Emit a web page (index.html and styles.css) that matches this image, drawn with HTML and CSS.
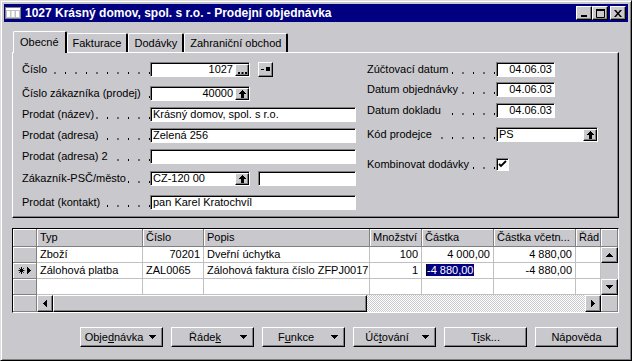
FILE: index.html
```html
<!DOCTYPE html>
<html lang="cs">
<head>
<meta charset="utf-8">
<title>Prodejní objednávka</title>
<link rel="stylesheet" href="styles.css">
</head>
<body>
<div class="window">
  <div class="titlebar">
    <svg class="appicon" width="16" height="14" viewBox="0 0 16 14"><rect x="0.5" y="1.5" width="15" height="11" fill="#c0c0c0" stroke="#808080"/><rect x="1" y="2" width="14" height="2" fill="#fff"/><rect x="2" y="5" width="3" height="6" fill="#fff"/><rect x="6.5" y="5" width="3" height="6" fill="#fff"/><rect x="11" y="5" width="3" height="6" fill="#fff"/></svg>
    <span class="title">1027 Krásný domov, spol. s r.o. - Prodejní objednávka</span>
    <div class="wbtns">
      <span class="wbtn"><svg width="8" height="8" viewBox="0 0 8 8"><rect x="1" y="6" width="6" height="2"/></svg></span>
      <span class="wbtn"><svg width="9" height="9" viewBox="0 0 9 9"><path d="M0.5 0.5h8v8h-8z" fill="none" stroke="#000"/><rect x="0" y="0" width="9" height="2"/></svg></span>
      <span class="wbtn close"><svg width="8" height="7" viewBox="0 0 8 7"><path d="M0 0h2l2 2.4L6 0h2L5 3.5 8 7H6L4 4.6 2 7H0l3-3.5z"/></svg></span>
    </div>
  </div>

  <div class="content">
    <div class="tabs">
      <div class="tab active">Obecné</div>
      <div class="tab">Fakturace</div>
      <div class="tab">Dodávky</div>
      <div class="tab">Zahraniční obchod</div>
    </div>

    <div class="panel">
      <div class="col col-left">
        <div class="row">
          <div class="lbl"><span>Číslo</span></div>
          <div class="field w100"><span class="val num">1027</span><span class="lk"><svg width="9" height="2" viewBox="0 0 9 2"><rect x="0" y="0" width="2" height="2"/><rect x="3.5" y="0" width="2" height="2"/><rect x="7" y="0" width="2" height="2"/></svg></span></div>
          <span class="sq"><svg width="9" height="5" viewBox="0 0 9 5"><rect x="0" y="2" width="3" height="1"/><rect x="5" y="0" width="4" height="4"/></svg></span>
        </div>
        <div class="row g9">
          <div class="lbl"><span>Číslo zákazníka (prodej)</span></div>
          <div class="field w100"><span class="val num">40000</span><span class="lk"><svg width="7" height="8" viewBox="0 0 7 8"><path d="M3 0h1v1h1v1h1v1h1v1H5v4H2V4H0V3h1V2h1V1h1z"/></svg></span></div>
        </div>
        <div class="row g6">
          <div class="lbl"><span>Prodat (název)</span></div>
          <div class="field wfull"><span class="val">Krásný domov, spol. s r.o.</span></div>
        </div>
        <div class="row g6">
          <div class="lbl"><span>Prodat (adresa)</span></div>
          <div class="field wfull"><span class="val">Zelená 256</span></div>
        </div>
        <div class="row g6">
          <div class="lbl"><span>Prodat (adresa) 2</span></div>
          <div class="field wfull"><span class="val"></span></div>
        </div>
        <div class="row g7">
          <div class="lbl"><span>Zákazník-PSČ/město</span></div>
          <div class="field w100"><span class="val">CZ-120 00</span><span class="lk"><svg width="7" height="8" viewBox="0 0 7 8"><path d="M3 0h1v1h1v1h1v1h1v1H5v4H2V4H0V3h1V2h1V1h1z"/></svg></span></div>
          <div class="field w98"><span class="val"></span></div>
        </div>
        <div class="row g9">
          <div class="lbl"><span>Prodat (kontakt)</span></div>
          <div class="field wfull"><span class="val">pan Karel Kratochvíl</span></div>
        </div>
      </div>

      <div class="col col-right">
        <div class="row">
          <div class="lbl"><span>Zúčtovací datum</span></div>
          <div class="field wdate"><span class="val num">04.06.03</span></div>
        </div>
        <div class="row g5">
          <div class="lbl"><span>Datum objednávky</span></div>
          <div class="field wdate"><span class="val num">04.06.03</span></div>
        </div>
        <div class="row g6">
          <div class="lbl"><span>Datum dokladu</span></div>
          <div class="field wdate"><span class="val num">04.06.03</span></div>
        </div>
        <div class="row g9">
          <div class="lbl"><span>Kód prodejce</span></div>
          <div class="field wcode"><span class="val">PS</span><span class="lk"><svg width="7" height="8" viewBox="0 0 7 8"><path d="M3 0h1v1h1v1h1v1h1v1H5v4H2V4H0V3h1V2h1V1h1z"/></svg></span></div>
        </div>
        <div class="row g15">
          <div class="lbl"><span>Kombinovat dodávky</span></div>
          <span class="check"><svg width="9" height="9" viewBox="0 0 9 9"><path d="M1 4l2 2 5-5" fill="none" stroke="#000" stroke-width="1.8"/></svg></span>
        </div>
      </div>
    </div>

    <div class="grid">
      <div class="h rh"></div>
      <div class="h">Typ</div>
      <div class="h">Číslo</div>
      <div class="h">Popis</div>
      <div class="h">Množství</div>
      <div class="h">Částka</div>
      <div class="h">Částka včetn...</div>
      <div class="h">Řád</div>
      <div class="h vcorner"></div>

      <div class="rh"></div>
      <div class="c">Zboží</div>
      <div class="c r">70201</div>
      <div class="c">Dveřní úchytka</div>
      <div class="c r">100</div>
      <div class="c r">4 000,00</div>
      <div class="c r">4 880,00</div>
      <div class="c"></div>

      <div class="vs">
        <span class="sb"><svg width="7" height="4" viewBox="0 0 7 4"><path d="M3 0h1v1h1v1h1v1h1v1H0V3h1V2h1V1h1z"/></svg></span>
        <span class="vtrack"></span>
        <span class="sb"><svg width="7" height="4" viewBox="0 0 7 4"><path d="M0 0h7v1H6v1H5v1H4v1H3V3H2V2H1V1H0z"/></svg></span>
      </div>

      <div class="rh cur"><svg width="14" height="9" viewBox="0 0 14 9"><path d="M3.5 1v7M0.5 4.5h6M1.3 2.3l4.4 4.4M5.7 2.3l-4.4 4.4" stroke="#000" fill="none"/><path d="M9 1h1v1h1v1h1v1h1v1h-1v1h-1v1h-1v1H9z"/></svg></div>
      <div class="c">Zálohová platba</div>
      <div class="c">ZAL0065</div>
      <div class="c">Zálohová faktura číslo ZFPJ0017</div>
      <div class="c r">1</div>
      <div class="c selcell"><span class="sel">-4 880,00</span></div>
      <div class="c r">-4 880,00</div>
      <div class="c"></div>

      <div class="rh"></div>
      <div class="c"></div>
      <div class="c"></div>
      <div class="c"></div>
      <div class="c"></div>
      <div class="c"></div>
      <div class="c"></div>
      <div class="c"></div>

      <div class="rh hcorner"></div>
      <div class="hs">
        <span class="sb hb"><svg width="4" height="7" viewBox="0 0 4 7"><path d="M4 0v7H3V6H2V5H1V4H0V3h1V2h1V1h1V0z"/></svg></span>
        <span class="thumb"></span>
        <span class="htrack"></span>
        <span class="sb hb"><svg width="4" height="7" viewBox="0 0 4 7"><path d="M0 0h1v1h1v1h1v1h1v1h-1v1h-1v1h-1v1H0z"/></svg></span>
      </div>
      <div class="rh corner"></div>
    </div>

    <div class="btns">
      <button class="btn dd"><span class="bt">Obje<u>d</u>návka</span><svg width="7" height="4" viewBox="0 0 7 4"><path d="M0 0h7v1H6v1H5v1H4v1H3V3H2V2H1V1H0z"/></svg></button>
      <button class="btn dd"><span class="bt">Řáde<u>k</u></span><svg width="7" height="4" viewBox="0 0 7 4"><path d="M0 0h7v1H6v1H5v1H4v1H3V3H2V2H1V1H0z"/></svg></button>
      <button class="btn dd"><span class="bt">F<u>u</u>nkce</span><svg width="7" height="4" viewBox="0 0 7 4"><path d="M0 0h7v1H6v1H5v1H4v1H3V3H2V2H1V1H0z"/></svg></button>
      <button class="btn dd"><span class="bt">Úč<u>t</u>ování</span><svg width="7" height="4" viewBox="0 0 7 4"><path d="M0 0h7v1H6v1H5v1H4v1H3V3H2V2H1V1H0z"/></svg></button>
      <button class="btn"><span class="bt">T<u>i</u>sk...</span></button>
      <button class="btn"><span class="bt">Nápověda</span></button>
    </div>
  </div>
</div>
</body>
</html>
```

FILE: styles.css
```css
* { box-sizing: border-box; }
html, body { margin: 0; padding: 0; }
body {
  width: 632px;
  height: 361px;
  overflow: hidden;
  background: #c9c8cc;
  font-family: "Liberation Sans", Arial, sans-serif;
  font-size: 11px;
  color: #000;
}

.window {
  width: 632px;
  height: 361px;
  border: 1px solid;
  border-color: #dfdfdf #000 #000 #dfdfdf;
  box-shadow: inset 1px 1px #fff, inset -1px -1px #808080;
  padding: 3px;
  background: #c9c8cc;
  display: flex;
  flex-direction: column;
}

/* title bar */
.titlebar {
  height: 18px;
  flex: none;
  background: #000080;
  color: #fff;
  display: flex;
  align-items: center;
  padding: 0 2px 0 1px;
}
.appicon { display: block; flex: none; }
.title {
  font-weight: bold;
  font-size: 12px;
  margin-left: 4px;
  white-space: nowrap;
}
.wbtns { margin-left: auto; display: flex; }
.wbtn {
  width: 16px;
  height: 14px;
  background: #c9c8cc;
  border: 1px solid;
  border-color: #fff #000 #000 #fff;
  box-shadow: inset -1px -1px #808080;
  display: flex;
  align-items: center;
  justify-content: center;
}
.wbtn svg { display: block; }
.close { margin-left: 2px; }

/* content */
.content {
  flex: 1;
  padding: 9px 9px 0 8px;
  display: flex;
  flex-direction: column;
}

/* tabs */
.tabs {
  display: flex;
  align-items: flex-end;
  height: 21px;
  padding-left: 1px;
}
.tab {
  height: 19px;
  line-height: 18px;
  padding: 0 5px;
  border-left: 1px solid #fff;
  border-top: 1px solid #fff;
  border-right: 2px solid #000;
  border-radius: 2px 2px 0 0;
  white-space: nowrap;
}
.tab.active {
  height: 22px;
  line-height: 21px;
  padding: 0 6px;
  margin-bottom: -1px;
  position: relative;
  z-index: 1;
  background: #c9c8cc;
}

/* panel */
.panel {
  height: 166px;
  border: 1px solid;
  border-color: #fff #000 #000 #fff;
  box-shadow: inset -1px -1px #808080;
  padding: 9px 0 0 9px;
  display: flex;
  gap: 11px;
}
.col { display: flex; flex-direction: column; }
.col-left { width: 334px; }
.col-right { width: 240px; }

.row { display: flex; height: 15px; align-items: center; }
.g5 { margin-top: 5px; }
.g6 { margin-top: 6px; }
.g7 { margin-top: 7px; }
.g9 { margin-top: 9px; }
.g15 { margin-top: 15px; }

.lbl {
  height: 15px;
  line-height: 15px;
  width: 128px;
  flex: none;
  white-space: nowrap;
  background-image: linear-gradient(to right, #000 0 1px, transparent 1px);
  background-size: 10.5px 2px;
  background-repeat: repeat-x;
  background-position: right 1px top 10px;
}
.col-right .lbl { width: 129px; background-position: right 2px top 10px; }
.lbl span {
  background: #c9c8cc;
  padding-right: 2px;
}

.field {
  height: 15px;
  flex: none;
  background: #fff;
  border: 1px solid;
  border-color: #808080 #fff #fff #808080;
  box-shadow: inset 1px 1px #000;
  display: flex;
  align-items: stretch;
  padding: 0 0 0 2px;
  line-height: 13px;
  white-space: nowrap;
  overflow: hidden;
}
.val { flex: 1; }
.num { text-align: right; padding-right: 2px; }
.w100 { width: 100px; }
.w98 { width: 98px; margin-left: 8px; }
.wfull { width: 206px; }
.wdate { width: 59px; }
.wcode { width: 102px; }

.lk {
  width: 14px;
  height: 12px;
  margin-top: 1px;
  flex: none;
  background: #c9c8cc;
  border: 1px solid;
  border-color: #fff #000 #000 #fff;
  box-shadow: inset -1px -1px #808080;
  display: flex;
  align-items: center;
  justify-content: center;
}
.lk svg { display: block; }
.lk svg[height="2"] { margin-top: 5px; }

.sq {
  width: 15px;
  height: 15px;
  margin-left: 8px;
  background: #c9c8cc;
  border: 1px solid;
  border-color: #fff #000 #000 #fff;
  box-shadow: inset -1px -1px #808080;
  display: flex;
  align-items: center;
  justify-content: center;
}

.check {
  width: 13px;
  height: 13px;
  background: #fff;
  border: 1px solid;
  border-color: #808080 #fff #fff #808080;
  box-shadow: inset 1px 1px #000;
  display: flex;
  align-items: center;
  justify-content: center;
}
.check svg { display: block; }

/* grid */
.grid {
  margin-top: 10px;
  height: 85px;
  width: 607px;
  border: 1px solid;
  border-color: #000 #fff #fff #000;
  background: #fff;
  display: grid;
  grid-template-columns: 24px 106px 61px 166px 52px 72px 82px 25px 17px;
  grid-template-rows: 18px 16px 16px 16px 17px;
}
.h {
  background: #c9c8cc;
  border-right: 1px solid #808080;
  border-bottom: 1px solid #808080;
  box-shadow: inset 1px 1px #fff;
  padding: 0 3px;
  line-height: 17px;
  white-space: nowrap;
  overflow: hidden;
}
.rh {
  background: #c9c8cc;
  border-right: 1px solid #808080;
  border-bottom: 1px solid #808080;
  box-shadow: inset 1px 1px #fff;
}
.rh.cur { display: flex; align-items: center; justify-content: flex-end; padding-right: 4px; }
.rh.cur svg { display: block; }
.c {
  border-right: 1px solid #c0c0c0;
  border-bottom: 1px solid #c0c0c0;
  padding: 0 3px;
  line-height: 15px;
  white-space: nowrap;
  overflow: hidden;
}
.r { text-align: right; }
.selcell { padding-left: 4px; }
.sel {
  background: #000080;
  color: #fff;
  border-left: 1px solid #000;
  padding-right: 1px;
}

.vs {
  grid-column: 9;
  grid-row: 2 / 5;
  display: flex;
  flex-direction: column;
  background: #c9c8cc;
}
.sb {
  height: 16px;
  flex: none;
  background: #c9c8cc;
  border: 1px solid;
  border-color: #fff #000 #000 #fff;
  box-shadow: inset -1px -1px #808080;
  display: flex;
  align-items: center;
  justify-content: center;
}
.sb svg { display: block; }
.vtrack { flex: 1; background: #c9c8cc; }

.hs {
  grid-column: 2 / 9;
  grid-row: 5;
  display: flex;
}
.hb { width: 16px; height: 17px; }
.thumb {
  width: 314px;
  background: #c9c8cc;
  border: 1px solid;
  border-color: #fff #000 #000 #fff;
  box-shadow: inset -1px -1px #808080;
}
.htrack {
  flex: 1;
  background-color: #c9c8cc;
  background-image: repeating-conic-gradient(#fff 0% 25%, #c9c8cc 0% 50%);
  background-size: 2px 2px;
}

/* buttons */
.btns {
  display: flex;
  justify-content: flex-end;
  gap: 8px;
  margin-top: 14px;
  padding-right: 1px;
}
.btn {
  width: 83px;
  height: 20px;
  margin: 0;
  background: #c9c8cc;
  border: 1px solid;
  border-color: #fff #000 #000 #fff;
  box-shadow: inset -1px -1px #808080;
  font: inherit;
  color: #000;
  display: flex;
  align-items: center;
  padding: 0 4px;
}
.btn.dd { padding: 0 6px 0 2px; }
.bt { flex: 1; text-align: center; white-space: nowrap; }
.btn svg { display: block; flex: none; margin-left: 4px; }
```
